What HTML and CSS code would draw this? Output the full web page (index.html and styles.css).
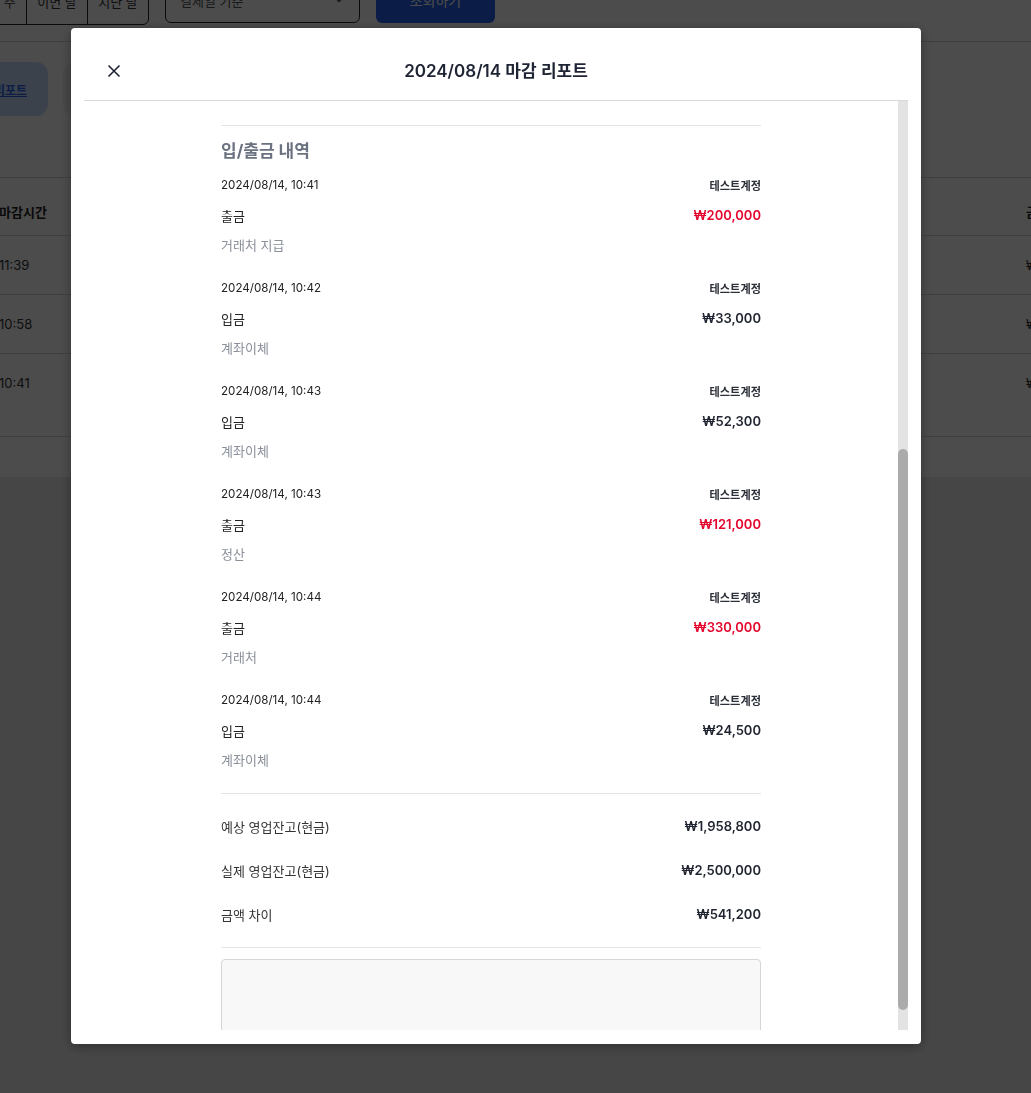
FILE: index.html
```html
<!DOCTYPE html>
<html lang="ko">
<head>
<meta charset="utf-8">
<title>마감 리포트</title>
<link rel="stylesheet" href="styles.css">
</head>
<body>
<div class="page">
  <div class="toolbar">
    <div class="seg">
      <span class="seg-btn">이번 주</span>
      <span class="seg-btn">이번 달</span>
      <span class="seg-btn">지난 달</span>
    </div>
    <div class="select"><span>결제일 기준</span><svg class="chev" viewBox="0 0 12 12"><path d="M3 4.5l3 3 3-3"/></svg></div>
    <div class="btn-primary">조회하기</div>
  </div>
  <div class="tabs">
    <div class="tab tab-active">마감 리포트</div>
    <div class="tab">일별 매출</div>
  </div>
  <div class="table">
    <div class="tr th"><div class="c1">마감시간</div><div class="c2">금액</div></div>
    <div class="tr"><div class="c1">11:39</div><div class="c2">₩1,958,800</div></div>
    <div class="tr"><div class="c1">10:58</div><div class="c2">₩1,240,000</div></div>
    <div class="tr tr-tall"><div class="c1">10:41</div><div class="c2">₩980,500</div></div>
  </div>
</div>

<div class="overlay">
  <div class="modal">
    <div class="modal-header">
      <button class="close" type="button" aria-label="닫기"><svg viewBox="0 0 14 14"><path d="M1.5 1.5l11 11M12.5 1.5l-11 11"/></svg></button>
      <h2 class="modal-title">2024/08/14 마감 리포트</h2>
      <span></span>
    </div>
    <div class="modal-main">
      <div class="modal-body">
        <div class="report">
          <section class="sec sec-first">
            <h3 class="sec-title">기본 정보</h3>
            <div class="row"><span class="label">영업일</span><span class="value">2024/08/14</span></div>
            <div class="row"><span class="label">마감 담당자</span><span class="value">테스트계정</span></div>
            <div class="row"><span class="label">마감 시간</span><span class="value">2024/08/14, 11:39</span></div>
            <div class="row"><span class="label">영업 시작잔고(현금)</span><span class="value">₩1,000,000</span></div>
            <div class="row"><span class="label">총 매출</span><span class="value">₩3,420,000</span></div>
          </section>
          <section class="sec sec-second">
            <h3 class="sec-title">매출 내역</h3>
            <div class="row"><span class="label">현금 매출</span><span class="value">₩1,500,000</span></div>
            <div class="row"><span class="label">카드 매출</span><span class="value">₩1,620,000</span></div>
            <div class="row"><span class="label">계좌이체 매출</span><span class="value">₩300,000</span></div>
            <div class="row"><span class="label">할인</span><span class="value">₩0</span></div>
            <div class="row"><span class="label">환불</span><span class="value">₩0</span></div>
          </section>

          <section class="sec history" id="history">
            <h3 class="sec-title">입/출금 내역</h3>
            <div class="tx">
              <div class="tx-top"><span class="tx-date">2024/08/14, 10:41</span><span class="tx-user">테스트계정</span></div>
              <div class="tx-mid"><span class="tx-type">출금</span><span class="tx-amt out">₩200,000</span></div>
              <div class="tx-memo">거래처 지급</div>
            </div>
            <div class="tx">
              <div class="tx-top"><span class="tx-date">2024/08/14, 10:42</span><span class="tx-user">테스트계정</span></div>
              <div class="tx-mid"><span class="tx-type">입금</span><span class="tx-amt">₩33,000</span></div>
              <div class="tx-memo">계좌이체</div>
            </div>
            <div class="tx">
              <div class="tx-top"><span class="tx-date">2024/08/14, 10:43</span><span class="tx-user">테스트계정</span></div>
              <div class="tx-mid"><span class="tx-type">입금</span><span class="tx-amt">₩52,300</span></div>
              <div class="tx-memo">계좌이체</div>
            </div>
            <div class="tx">
              <div class="tx-top"><span class="tx-date">2024/08/14, 10:43</span><span class="tx-user">테스트계정</span></div>
              <div class="tx-mid"><span class="tx-type">출금</span><span class="tx-amt out">₩121,000</span></div>
              <div class="tx-memo">정산</div>
            </div>
            <div class="tx">
              <div class="tx-top"><span class="tx-date">2024/08/14, 10:44</span><span class="tx-user">테스트계정</span></div>
              <div class="tx-mid"><span class="tx-type">출금</span><span class="tx-amt out">₩330,000</span></div>
              <div class="tx-memo">거래처</div>
            </div>
            <div class="tx">
              <div class="tx-top"><span class="tx-date">2024/08/14, 10:44</span><span class="tx-user">테스트계정</span></div>
              <div class="tx-mid"><span class="tx-type">입금</span><span class="tx-amt">₩24,500</span></div>
              <div class="tx-memo">계좌이체</div>
            </div>
          </section>

          <section class="sec totals">
            <div class="row"><span class="label">예상 영업잔고(현금)</span><span class="value">₩1,958,800</span></div>
            <div class="row"><span class="label">실제 영업잔고(현금)</span><span class="value">₩2,500,000</span></div>
            <div class="row"><span class="label">금액 차이</span><span class="value">₩541,200</span></div>
          </section>

          <section class="sec memo-sec">
            <textarea class="memo" readonly></textarea>
          </section>
        </div>
      </div>
      <div class="scroll-track"><div class="scroll-thumb"></div></div>
    </div>
  </div>
</div>
<script src="script.js"></script>
</body>
</html>
```
FILE: styles.css
```css
* { box-sizing: border-box; }
html, body { margin: 0; padding: 0; }
body {
  width: 1031px;
  height: 1093px;
  overflow: hidden;
  background: #e9e9e9;
  font-family: Inter, "Noto Sans CJK KR", sans-serif;
  color: #222;
}

/* ---------- background page ---------- */
.page {
  margin: -23px 0 0 -35px;
  background: #fff;
  padding-bottom: 40px;
}
.toolbar {
  display: flex;
  align-items: flex-start;
  gap: 16px;
  padding-bottom: 16px;
  border-bottom: 1px solid #d4d4d4;
}
.seg {
  display: flex;
  border: 1px solid #2a2a2a;
  border-radius: 0 0 6px 6px;
  height: 48px;
}
.seg-btn {
  width: 61px;
  display: flex;
  align-items: center;
  justify-content: center;
  font-size: 13px;
  color: #333;
  border-left: 1px solid #2a2a2a;
}
.seg-btn:first-child { border-left: 0; width: 60px; }
.select {
  width: 195px;
  height: 46px;
  border: 1px solid #2a2a2a;
  border-radius: 6px;
  display: flex;
  align-items: center;
  justify-content: space-between;
  padding: 0 14px;
  font-size: 13px;
  color: #555;
}
.chev { width: 12px; height: 12px; fill: none; stroke: #555; stroke-width: 1.4; }
.btn-primary {
  width: 119px;
  height: 46px;
  border-radius: 6px;
  background: #2563eb;
  color: #fff;
  font-size: 14px;
  display: flex;
  align-items: center;
  justify-content: center;
}
.tabs {
  display: flex;
  gap: 15px;
  margin: 20px 0 0 -14px;
}
.tab {
  height: 54px;
  padding: 0 21px 0 18px;
  border-radius: 12px;
  background: #f1f1f1;
  display: flex;
  align-items: center;
  font-size: 12px;
  font-weight: 700;
  color: #555;
}
.tab-active {
  background: #c9dcfb;
  color: #2563eb;
  text-decoration: underline;
}
.table {
  margin-top: 61px;
  border-top: 1px solid #d4d4d4;
}
.tr {
  display: flex;
  height: 59px;
  padding: 19px 0 0 35px;
  border-bottom: 1px solid #d4d4d4;
  font-size: 13px;
  line-height: 20px;
  color: #333;
}
.tr.th { height: 58px; padding-top: 24px; font-weight: 700; color: #222; }
.tr.tr-tall { height: 83px; }
.c1 { width: 1027px; flex: none; margin-left: -1px; }
.c2 { white-space: nowrap; }

/* ---------- overlay & modal ---------- */
.overlay {
  position: fixed;
  inset: 0;
  background: rgba(0, 0, 0, 0.7);
  display: flex;
  align-items: flex-start;
  padding: 28px 0 0 71px;
}
.modal {
  width: 850px;
  height: 1016px;
  background: #fff;
  border-radius: 4px;
  box-shadow: 0 2px 12px rgba(0, 0, 0, 0.35);
  padding: 0 13px 14px;
  display: flex;
  flex-direction: column;
}
.modal-header {
  flex: none;
  height: 73px;
  padding-top: 13px;
  display: grid;
  grid-template-columns: 1fr auto 1fr;
  align-items: center;
  border-bottom: 1px solid #d6d9de;
}
.close {
  justify-self: start;
  margin-left: 22px;
  width: 16px;
  height: 16px;
  padding: 0;
  border: 0;
  background: none;
  display: flex;
  align-items: center;
  justify-content: center;
}
.close svg { width: 14px; height: 14px; fill: none; stroke: #1e2433; stroke-width: 1.6; }
.modal-title {
  margin: 0;
  font-size: 17px;
  font-weight: 600;
  color: #1e2433;
  line-height: 24px;
}
.modal-main {
  flex: 1;
  min-height: 0;
  display: flex;
}
.modal-body {
  flex: 1;
  min-width: 0;
  overflow-y: scroll;
  scrollbar-width: none;
}
.modal-body::-webkit-scrollbar { display: none; width: 0; }
.scroll-track {
  flex: none;
  width: 10px;
  background: #e3e3e3;
}
.scroll-thumb {
  width: 10px;
  height: 561px;
  margin-top: 348px;
  border-radius: 5px;
  background: #ababab;
}

.report {
  width: 540px;
  margin: 0 auto;
  padding-bottom: 4px;
}
.sec-title {
  margin: 0;
  height: 26px;
  line-height: 26px;
  font-size: 17px;
  font-weight: 700;
  color: #6b7280;
}
.sec-first { padding-top: 24px; }
.sec-first .sec-title, .sec-second .sec-title { margin-bottom: 10px; }
.sec-second { padding: 12px 0 51px; border-top: 1px solid #e4e4e4; }
.row {
  display: flex;
  justify-content: space-between;
  align-items: center;
  height: 44px;
}
.label { font-size: 13px; color: #333; }
.value { font-size: 13px; font-weight: 600; color: #1f2430; }

.history { border-top: 1px solid #e4e4e4; padding-top: 12px; }
.history .sec-title { margin-bottom: 11px; }
.tx { padding-bottom: 23px; }
.tx-top, .tx-mid {
  display: flex;
  justify-content: space-between;
  align-items: center;
  height: 20px;
}
.tx-mid { margin-top: 10px; }
.tx-date { font-size: 11.6px; color: #222; }
.tx-user { font-size: 11.2px; font-weight: 700; color: #2b2f38; }
.tx-type { font-size: 13px; color: #222; }
.tx-amt { font-size: 13px; font-weight: 600; color: #1f2430; }
.tx-amt.out { color: #e3062d; }
.tx-memo {
  margin-top: 10px;
  height: 20px;
  line-height: 20px;
  font-size: 13px;
  color: #8a8f99;
}

.totals {
  border-top: 1px solid #e4e4e4;
  border-bottom: 1px solid #e4e4e4;
  padding: 10px 0 11px;
}
.memo-sec { padding-top: 11px; }
.memo {
  display: block;
  width: 540px;
  height: 100px;
  resize: none;
  border: 1px solid #d6d6d6;
  border-radius: 4px;
  background: #f8f8f8;
  outline: none;
}
```
FILE: script.js
```js
(function () {
  var body = document.querySelector('.modal-body');
  var anchor = document.getElementById('history');
  var track = document.querySelector('.scroll-track');
  var thumb = document.querySelector('.scroll-thumb');
  if (!body || !anchor) return;
  var offset = anchor.getBoundingClientRect().top - body.getBoundingClientRect().top + body.scrollTop;
  body.scrollTop = offset - 24;
  if (track && thumb) {
    var view = body.clientHeight;
    var total = body.scrollHeight;
    var trackH = track.clientHeight;
    var thumbH = Math.round(trackH * view / total);
    var maxScroll = total - view;
    var top = maxScroll > 0 ? Math.round(body.scrollTop / maxScroll * (trackH - thumbH)) : 0;
    thumb.style.height = thumbH + 'px';
    thumb.style.marginTop = top + 'px';
  }
})();
```
